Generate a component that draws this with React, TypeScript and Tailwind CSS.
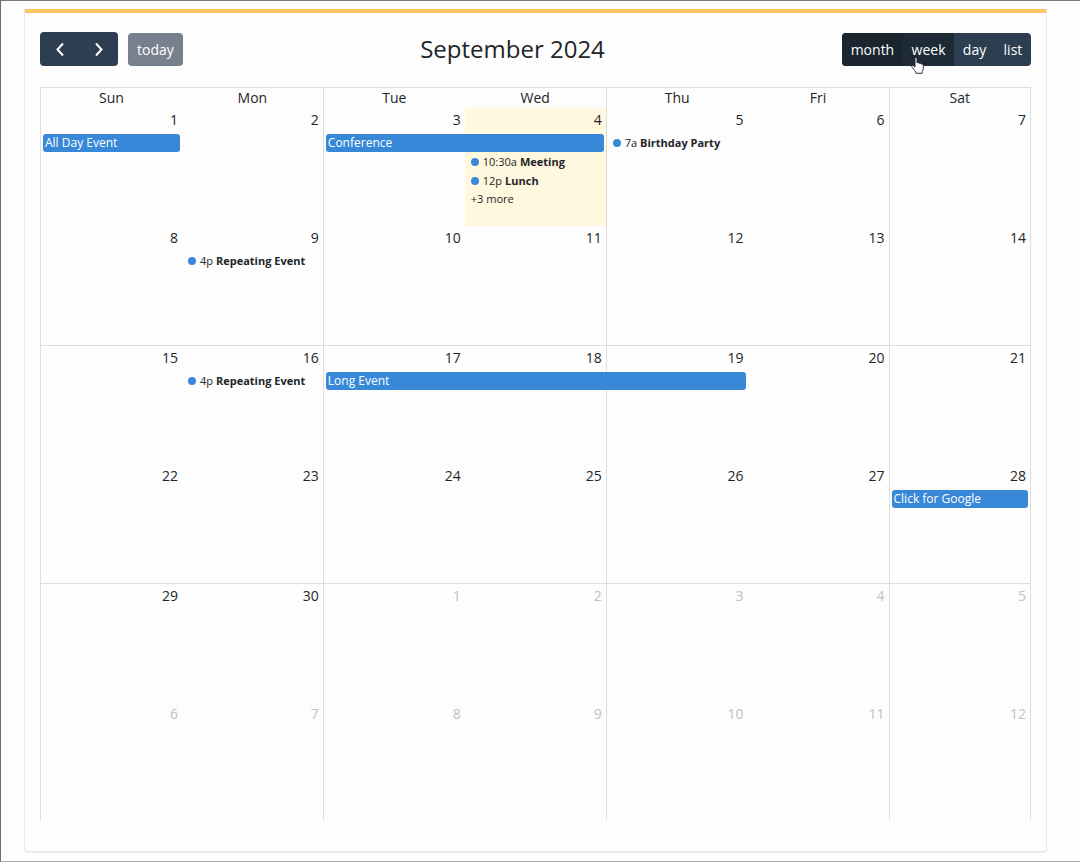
import React, { useState } from "react";

type CalendarEvent = {
  title: string;
  time?: string;
  span?: 1 | 2 | 3;
};

const weekdays = ["Sun", "Mon", "Tue", "Wed", "Thu", "Fri", "Sat"];
const views = ["month", "week", "day", "list"];
const today = 4;

const events: Record<number, CalendarEvent[]> = {
  1: [{ title: "All Day Event", span: 1 }],
  3: [{ title: "Conference", span: 2 }],
  4: [
    { title: "Meeting", time: "10:30a" },
    { title: "Lunch", time: "12p" },
  ],
  5: [{ title: "Birthday Party", time: "7a" }],
  9: [{ title: "Repeating Event", time: "4p" }],
  16: [{ title: "Repeating Event", time: "4p" }],
  17: [{ title: "Long Event", span: 3 }],
  28: [{ title: "Click for Google", span: 1 }],
};

const spanWidths = {
  1: "w-[calc(100%-4px)]",
  2: "w-[calc(200%-4px)]",
  3: "w-[calc(300%-3px)]",
};

const EventItem = ({ event }: { event: CalendarEvent }) => {
  if (event.span) {
    return (
      <a
        href="#"
        className={`relative z-10 ml-[2px] block h-[18px] rounded-[3px] bg-[#3788d8] px-[2px] text-left text-[12px] leading-[18px] whitespace-nowrap text-white ${spanWidths[event.span]}`}
      >
        {event.title}
      </a>
    );
  }

  return (
    <a
      href="#"
      className="mb-px flex h-[18px] items-center pl-[6px] text-left text-[11px] leading-[18px] whitespace-nowrap"
    >
      <span className="mr-1 size-2 shrink-0 rounded-full bg-[#3788d8]"></span>
      <span className="mr-[3px]">{event.time}</span>
      <span className="font-bold">{event.title}</span>
    </a>
  );
};

const DayCell = ({ index }: { index: number }) => {
  const row = Math.floor(index / 7);
  const col = index % 7;
  const inMonth = index < 30;
  const day = inMonth ? index + 1 : index - 29;
  const isToday = inMonth && day === today;
  const dayEvents = inMonth ? events[day] || [] : [];

  return (
    <td
      className={`border-[#ddd] p-0 align-top ${row === 0 || row === 5 ? "h-[118px]" : "h-[119px]"} ${
        col % 2 === 1 ? "border-r" : ""
      } ${row === 1 || row === 3 ? "border-b" : ""} ${isToday ? "bg-[#fff8df]" : ""}`}
    >
      <div
        className={`h-[26px] pr-1 text-right text-[14px] leading-6 ${inMonth ? "" : "text-[#bfc1c3]"}`}
      >
        {day}
      </div>
      {/* Leave room for the bar that runs over from the day before */}
      {isToday && <div className="h-[19px]"></div>}
      {dayEvents.map((event) => (
        <EventItem key={event.title} event={event} />
      ))}
      {isToday && (
        <a href="#" className="block pl-[6px] text-[11px] leading-[16px]">
          +3 more
        </a>
      )}
    </td>
  );
};

const App = () => {
  const [view, setView] = useState("month");

  return (
    <div className="min-h-screen border-t border-b border-l border-t-[#777] border-b-[#aaa] border-l-[#6c6c6c] bg-[#fdfdfd] py-2 pr-[33px] pl-[23px] font-['Open_Sans',sans-serif] text-[#212529]">
      <div className="rounded-b-[3px] border-x border-b border-[#e7e7e7] shadow-[0_1px_1px_rgba(0,0,0,0.06)]">
        <div className="h-1 bg-[#fec564]"></div>
        <div className="px-[15px] pt-[19px] pb-[31px]">
          {/* Toolbar */}
          <div className="mb-[21px] flex items-center justify-between">
            <div className="flex items-center gap-[10px]">
              <div className="flex overflow-hidden rounded-[4px] bg-[#2c3e50] text-white">
                <button aria-label="prev" className="flex h-[34px] w-[39px] items-center justify-center">
                  <svg className="h-4 w-4" viewBox="0 0 16 16" fill="none" stroke="currentColor" strokeWidth="2">
                    <path d="M11 2.5L5.5 8.5L11 14.5"></path>
                  </svg>
                </button>
                <button aria-label="next" className="flex h-[34px] w-[39px] items-center justify-center">
                  <svg className="h-4 w-4" viewBox="0 0 16 16" fill="none" stroke="currentColor" strokeWidth="2">
                    <path d="M5 2.5L10.5 8.5L5 14.5"></path>
                  </svg>
                </button>
              </div>
              <button
                disabled
                className="h-[33px] w-[55px] rounded-[4px] bg-[#76818d] text-[14px] text-white"
              >
                today
              </button>
            </div>
            <h2 className="text-[24px] leading-[34px]">September 2024</h2>
            <div className="relative flex">
              <div className="flex w-[189px] overflow-hidden rounded-[4px] bg-[#2c3e50] text-[14px] text-white">
                {views.map((name) => (
                  <button
                    key={name}
                    onClick={() => setView(name)}
                    className={`h-[33px] grow px-2 ${
                      name === view ? "bg-[#1a252f]" : name === "week" ? "bg-[#1e2b37]" : ""
                    }`}
                  >
                    {name}
                  </button>
                ))}
              </div>
              {/* Hand pointer */}
              <svg className="pointer-events-none absolute top-[24px] left-[69px] h-[17px] w-[13px]" viewBox="0 0 13 17">
                <path
                  d="M4 1.5C4 .3 6 .3 6 1.5V6C6.5 5.2 8 5.4 8 6.5C8.600 5.800 10 6.100 10 7.200C10.700 6.600 12.300 7 12.300 8.300V11.500C12.300 13.500 11 14 11 16.300H5C5 14.500 3 13 .8 9.800C.2 8.600 1.800 7.800 2.800 9L4 10.200Z"
                  fill="#fff"
                  stroke="#1a1f26"
                  strokeWidth="0.9"
                ></path>
              </svg>
            </div>
          </div>
          {/* Month grid */}
          <table className="w-full table-fixed border-collapse border-x border-t border-[#ddd]">
            <thead>
              <tr>
                {weekdays.map((name, i) => (
                  <th
                    key={name}
                    className={`h-5 border-[#ddd] p-0 text-[14px] leading-5 font-normal ${i % 2 === 1 ? "border-r" : ""}`}
                  >
                    {name}
                  </th>
                ))}
              </tr>
            </thead>
            <tbody>
              {[0, 1, 2, 3, 4, 5].map((week) => (
                <tr key={week}>
                  {weekdays.map((name, i) => (
                    <DayCell key={name} index={week * 7 + i} />
                  ))}
                </tr>
              ))}
            </tbody>
          </table>
        </div>
      </div>
    </div>
  );
};

export default App;
